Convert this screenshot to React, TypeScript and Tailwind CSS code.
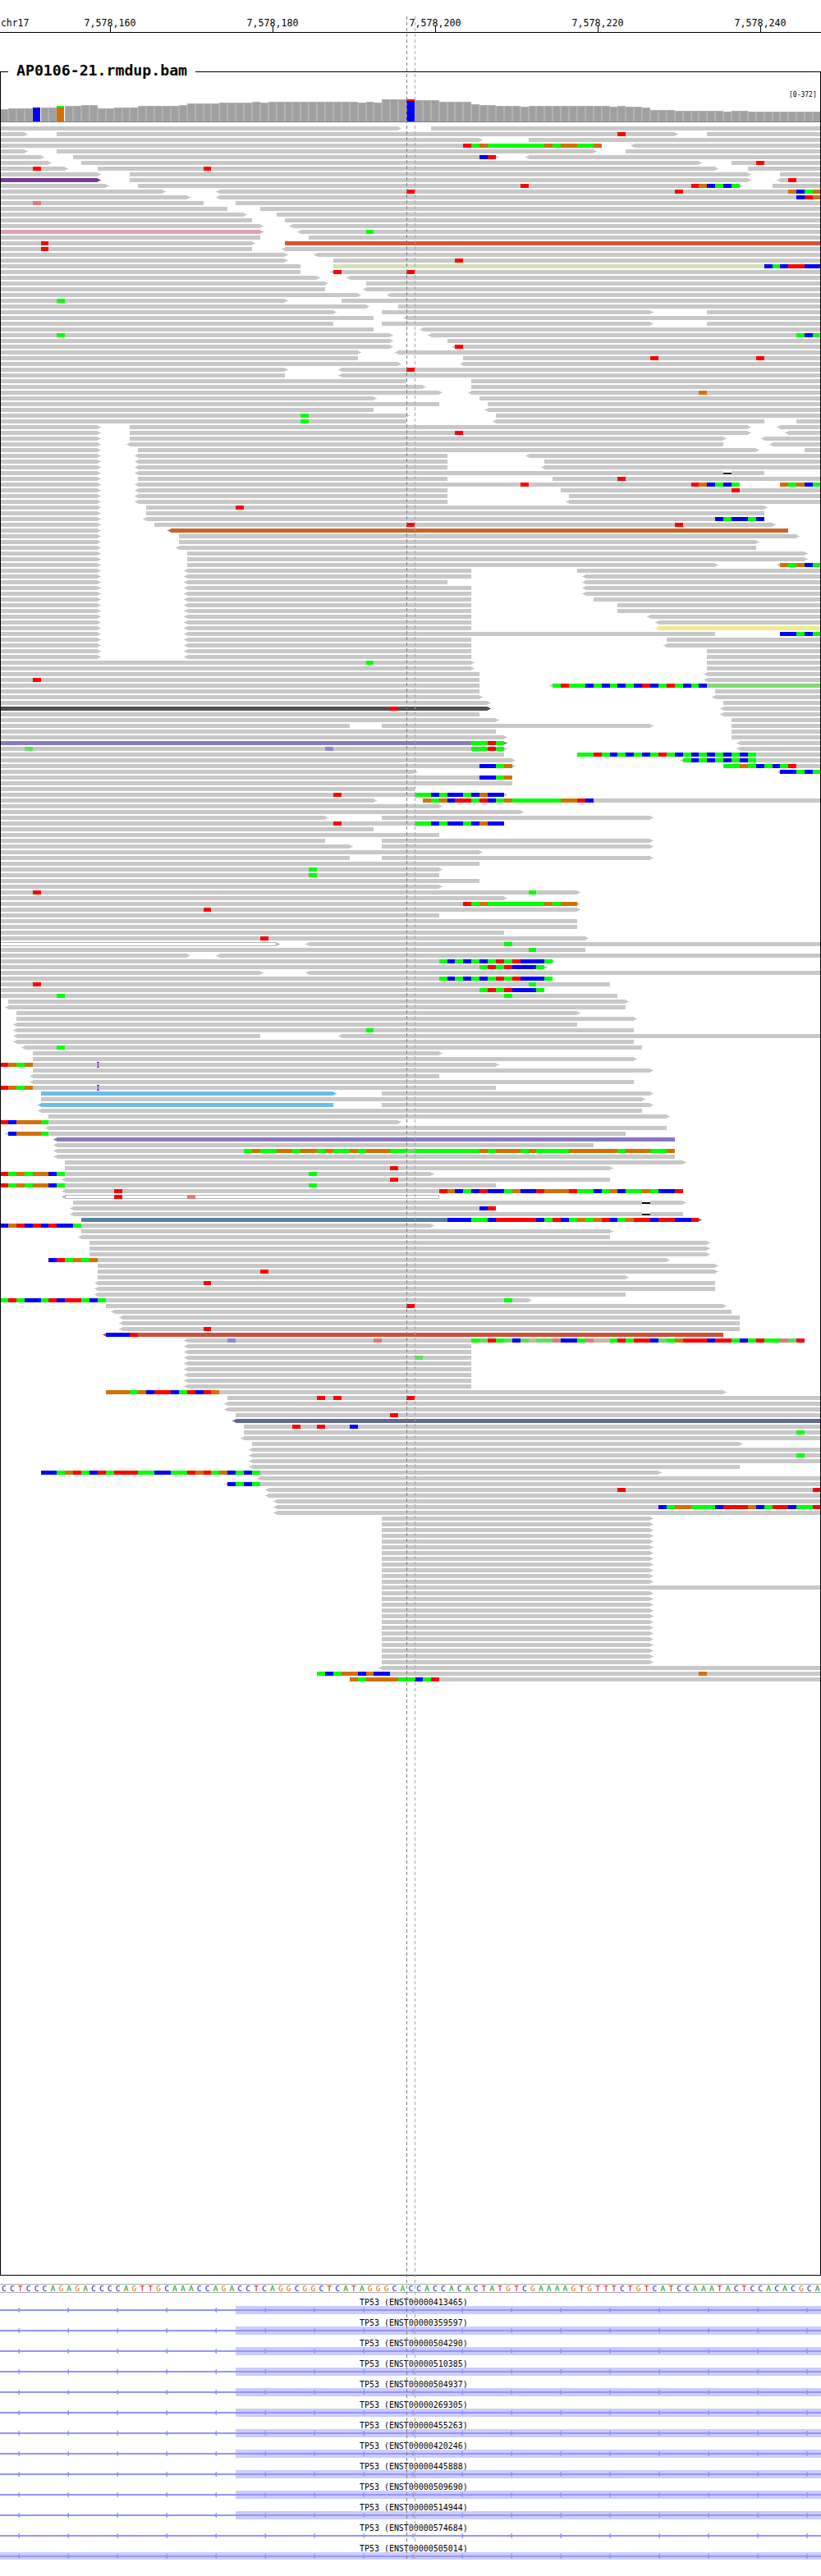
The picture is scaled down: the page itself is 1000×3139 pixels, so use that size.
import React from "react";

const BP = 1000 / 101;
const px = (k: number) => Math.round(k * BP);

const COLORS: Record<string, string> = {
  r: "#ff0000",
  g: "#00ff00",
  b: "#0000ff",
  o: "#d17105",
  L: "#60dc60",
  R: "#e07a7a",
  B: "#8a8ad8",
  t: "#c8b8a0",
};
const READ = "#c8c8c8";

// first rows, x measured on a 3x scale
const ROWS3 = [
  "0-1455> 1575-3000",
  "0-90> 207-2466> r2256 2583-3000",
  "0-1752> 1932-3000",
  "0-2199 r1692 g1722 o1752 g1782-1989 o1989 g2019 o2049-2109 g2109-2169 o2169 <2316-3000",
  "0-90> 207-2169> 2286-3000",
  "0-150> 267-1812> b1752 r1782 <1932-3000",
  "0-177> 297-2553> 2673-3000 r2763",
  "0-237> r120 357-2613> r744 2733-3000",
  "0-357> 474-2733> 2850-3000",
  "0-357>@7a3c96 474-2733> <2850-3000 r2880",
  "0-387> 504-2703> r1902 r2526 o2553 b2583 g2613 b2643 g2673 2823-3000",
  "0-597> <801-3000 r1485 r2466 o2880 b2910 g2940 o2970",
  "0-687> <801-3000 b2910 r2940 o2970",
  "0-744 R120 861-3000",
  "0-831 951-3000",
];

const HEAD_A = "g839 b855 g869 b884 g900 b916 g931 r947 g963 r978 b994-1040 g1040";
const HEAD_B = "g916 r931 g947 r963 b978-1024 g1024";
const HEAD_C = "g792-823 b823 g839 b855-884 g884 b900 o916 b931-963";

const ROWS = [
  "0-468> 528-1568",
  "0-481 544-1568",
  "0-498> <558-1568",
  "0-498>@e0a0b5 <574-1568 g699",
  "0-497 590-1568",
  "0-482> r78 544-1568@d9533a",
  "0-481 r78 <544-1568",
  "0-544> <605-1568",
  "0-544> 637-1568 r869",
  "0-574 637-1460@d5e0b8 b1460 g1476 b1490 r1506-1537 b1537-1568",
  "0-574 <637-1568 r637 r777",
  "0-605> <668-1568",
  "0-621> 699-1568",
  "0-621 <699-1568",
  "0-684> <745-1568",
  "0-544> g108 652-1568",
  "0-699> 760-1568",
  "0-637> 729-1243> 1350-1568",
  "0-713 <776-1568",
  "0-637 729-1243> 1350-1568",
  "0-713 <807-1568",
  "0-745> g108 <823-1568 g1521 b1537 g1552",
  "0-745> 855-1568",
  "0-745> <869-1568 r869",
  "0-684> <760-1568",
  "0-684 884-1568 r1242 r1444",
  "0-760> <884-1568",
  "0-544> <652-1568 r776",
  "0-544 <652-1568",
  "0-776 900-1568",
  "0-807> 900-1568",
  "0-838> <900-1568 o1334",
  "0-713> 916-1568",
  "0-838 931-1568",
  "0-713 <931-1568",
  "0-776> g574 947-1568",
  "0-776 g574 <947-1460 1521-1568",
  "0-186> 248-1429> <1490-1568",
  "0-186> 248-1429> r869 <1506-1568",
  "0-186> 248-1381> <1460-1568",
  "0-186> <248-1381 <1475-1568",
  "0-186> 263-1444> 1537-1568",
  "0-186> <263-855 <1010-1568",
  "0-186> <263-855 1040-1568",
  "0-186> <263-855 <1040-1568",
  "0-186> <263-1381 k1381 1399-1460",
  "0-186> 263-855 1055-1568 r1179",
  "0-186> <263-1413 r994 r1320 o1334 b1350 g1366 b1381 g1397 1490-1568 o1490 g1506 o1521 b1537 g1552",
  "0-186> <263-855 1071-1568 r1397",
  "0-186> <263-855 1087-1568",
  "0-186> <263-855 <1087-1568",
  "0-186> 279-1460> r450",
  "0-186> 279-1460",
  "0-186> <279-1460 b1366 g1381 b1397-1428 g1428 b1444",
  "0-186> 295-1475> r776 r1289",
  "0-186> <325-1505@c86428",
  "0-186> 342-1521>",
  "0-186> 342-1444>",
  "0-186> <342-1444",
  "0-186> 358-1537>",
  "0-186> 358-1537>",
  "0-186> 358-1366> <1490-1568 o1490 g1506 o1521 b1537 g1552",
  "0-186> <358-900 1102-1568",
  "0-186> <358-900 <1118-1568",
  "0-186> <358-855 <1118-1568",
  "0-186> <358-900 <1118-1568",
  "0-186> <358-900 <1118-1568",
  "0-186> <358-900 1134-1568",
  "0-186> <358-900 1179-1568",
  "0-186> <358-900 1179-1568",
  "0-186> <358-900 <1242-1568",
  "0-186> <358-900 <1258-1568",
  "0-186> <358-900 <1258-1568@f2ea8c",
  "0-186> <358-1366 1490-1568 b1490-1521 g1521 b1537 g1552",
  "0-186> <358-900 1273-1568",
  "0-186> <358-900 <1273-1568",
  "0-186> <358-900 1350-1568",
  "0-186> <358-900 1350-1568",
  "0-900> g699 1350-1568",
  "0-900> 1350-1568",
  "0-916 <1350-1568",
  "0-916 r63 <1350-1568",
  "0-916 <1350-1568@80dc70 <1055-1350 g1055 r1071 g1087-1118 b1118 g1134 b1149 g1165 b1180 g1195 b1210 r1226 b1242 g1258 r1273 g1289 b1305 g1320 b1335",
  "0-916 1366-1568",
  "0-916> <1366-1568",
  "0-931> 1381-1568",
  "0-931>@505050 r745 <1381-1568",
  "0-916 <1381-1568",
  "0-947> 1397-1568",
  // ---- second crop
  "0-668 729-1243> 1397-1568",
  "0-947 1397-1568",
  "0-965> 1397-1568",
  "0-963>@8a7dbe g900-931 r931 g947 <1413-1568",
  "0-963> L47 B621 g900-931 r931 g947 <1413-1568",
  "0-963 1102-1568 g1102-1134 r1134 g1149 b1165 g1180 b1195 g1210 b1226 g1242 r1258 g1273 b1289 g1305 b1320 g1335 b1350 g1366 b1381 g1397 b1413 g1428",
  "0-978> <1305-1568 g1305 b1320 g1335 b1350 g1366 b1381 g1397 b1413 g1428",
  "0-978> b916-947 g947 o963 1381-1568 g1381-1413 o1413 g1428 b1444 g1460 b1475 g1490 r1506",
  "0-792> <1490-1568 b1490-1521 g1521 b1537 g1552",
  "0-978 b916-947 g947 o963",
  "0-978",
  "0-792",
  "0-963> r637 " + HEAD_C,
  "0-714> 808-1568 o808 g823 o839 b855 r869-900 g900 r916 b931 g947 o963 g978-1071 o1071-1102 r1102 b1118",
  "0-838>",
  "0-994>",
  "0-621> 729-1243>",
  "0-963 r637 " + HEAD_C,
  "0-713",
  "0-838",
  "0-621 729-1243>",
  "0-668> 729-1243>",
  "0-916>",
  "0-668 729-1243>",
  "0-916",
  "0-838> g590",
  "0-838 g590",
  "0-916",
  "0-838>",
  "0-1102> r63 g1010",
  "0-963>",
  "0-1102> r884 g900 o916 g931-1040 o1040 g1055 o1071-1102",
  "0-1102> r389",
  "0-838",
  "0-1102",
  "0-1102",
  "0-963",
  "0-1118> r497",
  "0-528>@w <590-1568 g963",
  "0-1118 g1010",
  "0-358> <418-1568",
  "0-1055> " + HEAD_A,
  "0-1040> " + HEAD_B,
  "0-497> <590-1568",
  "0-1055 " + HEAD_A,
  "0-1164 r63 g1010",
  "0-1040 " + HEAD_B,
  "0-1179 g108 g963",
  "16-1195>",
  "<16-1195",
  "31-1102>",
  "31-1210>",
  "<31-1102",
  "<31-1210 g699",
  "<31-497 <652-1568",
  "<31-1210",
  "<47-1226 g108",
  "63-838>",
  "63-1210>",
  "0-947> r0 o16 g31 o47 i187",
  "63-1243>",
  "<63-838",
  "<63-1210",
  "0-947 r0 o16 g31 o47 i187",
  "78-637>@6cbce8 729-1243>",
  "78-1226>",
  "<78-637@6cbce8 729-1243>",
  "<78-1226",
  "93-1273>",
  "0-760> r0 b16 o31-78 g78",
  "<93-1273",
  "<16-1195 b16 o31-78 g78",
  "<108-1289@8a78bc",
  "<108-1134",
  "<108-1289 g466 o481 g497-528 o528-558 g558 o574-605 g605 o621 g637-668 o668 g684 o699-745 g745-776 L776 g792-916 o916 g931 o947-994 g994 o1010 g1024-1087 o1087-1179 g1179 o1195-1242 g1242-1273 o1273",
  "<108-1289",
  "124-1305>",
  "124-1164> r745",
  "0-823> r0 g16 o31 g47 o63-93 b93 g108 g590",
  "<124-1164 r745",
  "0-947 r0 g16 o31 g47 o63-93 b93 g108 g590",
  "<124-1305 r218 r839 o855 b869 g884 b900 r916 b931-963 g963 o978 b994-1024 r1024 o1040-1087 r1087 g1102-1134 b1134 g1149 o1165 b1180 g1195-1226 o1226 g1242 b1258-1289 r1289",
  "<124-838@w r218 R358",
  "140-1226 k1226 1243-1305>",
  "<140-947 b916 r931",
  "<140-1226 k1226 1243-1305",
  "155-1335>@5a82a0 b855-900 g900-931 b931 r947-1024 b1024 g1040 r1055 b1071 g1087 o1102 g1118 o1134 r1149 b1165 g1180 o1195 r1210-1242 b1242 r1258-1289 b1289-1320 r1320",
  "0-823> b0 o16 r31 b47 r63 b78 r93 b108-140 g140",
  // ---- third crop
  "155-1165>",
  "<155-1165",
  "171-1350>",
  "171-1350>",
  "171-1350>",
  "93-1273> b93 r108 g124 o140 g155 o171",
  "187-1366>",
  "187-1366> r497",
  "187-1195>",
  "<187-1366 r389",
  "<187-1366",
  "<187-1195",
  "0-1010> g0 r16 g31 b47-78 g78 r93 b108 r124-155 g155 b171 g187 g963",
  "202-1381> r776",
  "<218-1397",
  "<234-1413",
  "<234-1413",
  "<234-1413 r389",
  "<202-1381@d0503a b202-248 r248",
  "<358-1537 B434 R713 g900 L916 r931 g947 L963 b978 L994 t1010 L1024-1055 R1055 b1071-1102 g1102 R1118 t1134-1165 g1165 r1180 g1195 r1210-1242 b1242 L1258 g1273 o1289 r1305-1350 b1350 r1366-1397 g1397 b1413 g1428 r1444 g1460-1490 R1490 L1506 r1521",
  "<358-900",
  "<358-900",
  "<358-900 L792",
  "<358-900",
  "<358-900",
  "<358-900",
  "<358-900",
  "<358-900",
  "202-1381> o202-248 g248 o263 b279 r295-326 b326 g342 r358 b373 r389 o403",
  "434-1568 r605 r637 r776",
  "<434-1568",
  "<434-1568",
  "450-1568 r745",
  "<450-1568@606898",
  "466-1568 r558 r605 b668",
  "466-1568 g1521",
  "<466-1568",
  "481-1413>",
  "<481-1568",
  "<481-1568 g1521",
  "<481-1568",
  "<481-1413",
  "78-1258> b78-108 g108 o124 r140 g155 b171 r187 g202 r218-263 g263-295 b295-326 g326-358 r358 o373 r389 g403 o419 b434 g450 b466 g481",
  "<497-1568",
  "<434-1568 b434 g450 b466 g481",
  "<512-1568 r1179 r1552",
  "<512-1568",
  "<527-1568",
  "<527-1568 b1258 g1273 o1289-1320 g1320-1366 b1366 r1381-1428 o1428 b1444 g1460 r1475-1506 b1506 g1521-1552 r1552",
  "<527-1568",
  ...Array(12).fill("729-1243>"),
  "729-1568",
  ...Array(13).fill("729-1243>"),
  "<729-1568",
  "605-1568 g605 b621 g637 o652-684 b684 o699 b713-745 o1334",
  "668-1568 o668 g684 o699-760 g760-792 b792 g808 r823",
];

function Row({ spec, y, scale }: { spec: string; y: number; scale: number }) {
  const s = (z: number) => Math.round(z / scale / BP);
  const out: React.ReactNode[] = [];
  spec.split(" ").forEach((tok, n) => {
    const read = tok.match(/^(<?)(\d+)-(\d+)(>?)(?:@(\w+))?$/);
    if (read) {
      const x1 = px(s(+read[2]));
      const x2 = px(s(+read[3]));
      const hex = read[5];
      const white = hex === "w";
      const fill = white ? "#ffffff" : hex ? `#${hex}` : READ;
      const tip = white ? "#b4b4b4" : fill;
      if (read[1]) {
        out.push(<rect key={`${n}a`} x={x1 - 2} y={y + 1} width={2} height={3} fill={tip} />);
        out.push(<rect key={`${n}b`} x={x1 - 4} y={y + 2} width={2} height={1} fill={tip} />);
      }
      if (read[4]) {
        out.push(<rect key={`${n}c`} x={x2} y={y + 1} width={2} height={3} fill={tip} />);
        out.push(<rect key={`${n}d`} x={x2 + 2} y={y + 2} width={2} height={1} fill={tip} />);
      }
      if (white) {
        out.push(
          <rect key={n} x={x1 + 0.5} y={y + 0.5} width={x2 - x1 - 1} height={4} fill="#ffffff" stroke="#b4b4b4" />,
        );
      } else {
        out.push(<rect key={n} x={x1} y={y} width={x2 - x1} height={5} fill={fill} />);
      }
      return;
    }
    const ins = tok.match(/^i(\d+)$/);
    if (ins) {
      const x = Math.round(+ins[1] / scale);
      out.push(<rect key={n} x={x - 1} y={y - 1} width={3} height={1} fill="#7a20c8" />);
      out.push(<rect key={`${n}a`} x={x} y={y - 1} width={1} height={7} fill="#7a20c8" />);
      out.push(<rect key={`${n}b`} x={x - 1} y={y + 5} width={3} height={1} fill="#7a20c8" />);
      return;
    }
    const seg = tok.match(/^([a-zA-Z])(\d+)(?:-(\d+))?$/);
    if (seg) {
      const k = s(+seg[2]);
      const e = seg[3] ? s(+seg[3]) : k + 1;
      if (seg[1] === "k") {
        out.push(<rect key={n} x={px(k)} y={y + 2} width={px(e) - px(k)} height={2} fill="#000000" />);
      } else {
        out.push(<rect key={n} x={px(k)} y={y} width={px(e) - px(k)} height={5} fill={COLORS[seg[1]]} />);
      }
    }
  });
  return <g>{out}</g>;
}

// [x on a 3x scale, top of the bar on a 3x scale]
const COV: [number, number][] = [
  [0, 400], [30, 397], [120, 393], [237, 387], [297, 384], [357, 397], [417, 393], [504, 387], [654, 384],
  [684, 378], [801, 375], [921, 372], [951, 375], [981, 372], [1308, 375], [1338, 372], [1368, 375], [1395, 363],
  [1515, 366], [1605, 372], [1722, 381], [1752, 384], [1812, 387], [1902, 390], [1932, 387], [2230, 390],
  [2256, 387], [2286, 390], [2346, 393], [2376, 402], [2466, 405], [2643, 408], [2673, 405], [2733, 408],
];

function Coverage() {
  const bars: React.ReactNode[] = [];
  for (let k = 0; k < 101; k++) {
    const x3 = k * BP * 3 + 3;
    let top3 = COV[0][1];
    COV.forEach(([a, t]) => {
      if (x3 >= a) top3 = t;
    });
    const top = Math.round(top3 / 3);
    const x = px(k);
    const w = px(k + 1) - x;
    if (k === 4) {
      bars.push(<rect key={k} x={x} y={131} width={w - 1} height={17} fill="#0000ff" />);
      bars.push(<rect key="m4" x={44} y={131} width={1} height={1} fill="#ff0000" />);
    } else if (k === 7) {
      bars.push(<rect key={k} x={x} y={131} width={w - 1} height={17} fill="#d17105" />);
      bars.push(<rect key="m7" x={x} y={129} width={w - 1} height={2} fill="#00ff00" />);
    } else if (k === 50) {
      bars.push(<rect key={k} x={x} y={123} width={w} height={25} fill="#0000ff" />);
      bars.push(<rect key="m50" x={x} y={121} width={w} height={2} fill="#ff0000" />);
    } else {
      bars.push(<rect key={k} x={x} y={top} width={w} height={148 - top} fill="#b2b2b2" />);
      bars.push(<rect key={`i${k}`} x={x + 1} y={top + 1} width={w - 2} height={147 - top} fill="#a0a0a0" />);
    }
  }
  return (
    <svg viewBox="1 88 998 61" className="block w-[998px] h-[61px]" shapeRendering="crispEdges">
      {bars}
      <rect x={0} y={148} width={1000} height={1} fill="#7f7f7f" />
      <text x={961} y={118} fontSize={8} fill="#000000">
        [0-372]
      </text>
    </svg>
  );
}

const SEQ = "CCTCCCAGAGACCCCAGTTGCAAACCAGACCTCAGGCGGCTCATAGGGCACCACCACACTATGTCGAAAAGTGTTTCTGTCATCCAAATACTCCACACGCA";

function Base({ ch }: { ch: string }) {
  const tone =
    ch === "A" ? "text-[#009600]" : ch === "C" ? "text-[#1010c0]" : ch === "G" ? "text-[#d17105]" : "text-[#e00000]";
  return <span className={`flex-1 text-center ${tone}`}>{ch}</span>;
}

const GENES: { id: string; band: "part" | "none" | "full" }[] = [
  { id: "00000413465", band: "part" },
  { id: "00000359597", band: "part" },
  { id: "00000504290", band: "part" },
  { id: "00000510385", band: "part" },
  { id: "00000504937", band: "part" },
  { id: "00000269305", band: "part" },
  { id: "00000455263", band: "part" },
  { id: "00000420246", band: "part" },
  { id: "00000445888", band: "part" },
  { id: "00000509690", band: "part" },
  { id: "00000514944", band: "part" },
  { id: "00000574684", band: "none" },
  { id: "00000505014", band: "full" },
];

function Gene({ id, band }: { id: string; band: "part" | "none" | "full" }) {
  const marks = Array.from({ length: 17 }, (_, i) => 22.7 + 60 * i);
  return (
    <div className="h-[25px]">
      <div className="h-[15px] pl-[438px] text-[9.95px] leading-[22px] whitespace-pre text-black">
        {`TP53 (ENST${id})`}
      </div>
      <svg viewBox="0 0 1000 10" className="block w-[1000px] h-[10px]">
        {band === "part" && <rect x={287} y={0} width={713} height={10} fill="#ccccff" />}
        {band === "full" && <rect x={0} y={0} width={1000} height={9} fill="#ccccff" />}
        <rect x={0} y={4} width={1000} height={2} fill="#9494ff" />
        {marks.map((x) => (
          <polygon key={x} points={`${x - 2},5 ${x + 1.3},1.5 ${x + 1.3},8.5`} fill="#9494ff" />
        ))}
      </svg>
    </div>
  );
}

const TICKS: [number, string][] = [
  [134.5, "7,578,160"],
  [332.5, "7,578,180"],
  [530.5, "7,578,200"],
  [728.5, "7,578,220"],
  [926.5, "7,578,240"],
];

export default function App() {
  return (
    <div className="relative w-[1000px] h-[3139px] overflow-hidden bg-white font-['DejaVu_Sans_Mono',monospace] text-black">
      <svg viewBox="0 0 1000 40" className="block w-[1000px] h-[40px]">
        <text x={1} y={32} fontSize={11.4} fill="#000000">
          chr17
        </text>
        {TICKS.map(([x, label]) => (
          <g key={label}>
            <text x={x - 0.5} y={32} fontSize={11.6} textAnchor="middle" fill="#000000">
              {label}
            </text>
            <rect x={Math.floor(x)} y={32} width={1} height={7} fill="#000000" />
          </g>
        ))}
        <rect x={0} y={39} width={1000} height={1} fill="#000000" />
      </svg>

      <div className="relative mt-[47px] h-[2686px] border border-black">
        <span className="absolute left-[9px] -top-[15px] bg-white px-[10px] text-[18.2px] leading-[26px] font-bold">
          AP0106-21.rmdup.bam
        </span>
        <Coverage />
        <svg viewBox="1 149 998 2623" className="block w-[998px] h-[2623px]" shapeRendering="crispEdges">
          {ROWS3.map((spec, i) => (
            <Row key={`a${i}`} spec={spec} y={154 + 7 * i} scale={3} />
          ))}
          {ROWS.map((spec, i) => (
            <Row key={`b${i}`} spec={spec} y={154 + 7 * (i + 15)} scale={1.568} />
          ))}
        </svg>
      </div>

      <div className="mt-[10px] flex h-[11px] border-y border-[#aaaaaa] text-[9.5px] leading-[9px]">
        {SEQ.split("").map((ch, i) => (
          <Base key={i} ch={ch} />
        ))}
      </div>

      <div className="mt-[1px]">
        {GENES.map((g) => (
          <Gene key={g.id} id={g.id} band={g.band} />
        ))}
      </div>

      <svg className="absolute left-0 top-0 w-[1000px] h-[3139px] pointer-events-none" viewBox="0 0 1000 3139" shapeRendering="crispEdges">
        <line x1={495.5} y1={20} x2={495.5} y2={3120} stroke="#808080" strokeDasharray="4 3" />
        <line x1={505.5} y1={20} x2={505.5} y2={3120} stroke="#a8a8a8" strokeDasharray="4 3" />
      </svg>
    </div>
  );
}
